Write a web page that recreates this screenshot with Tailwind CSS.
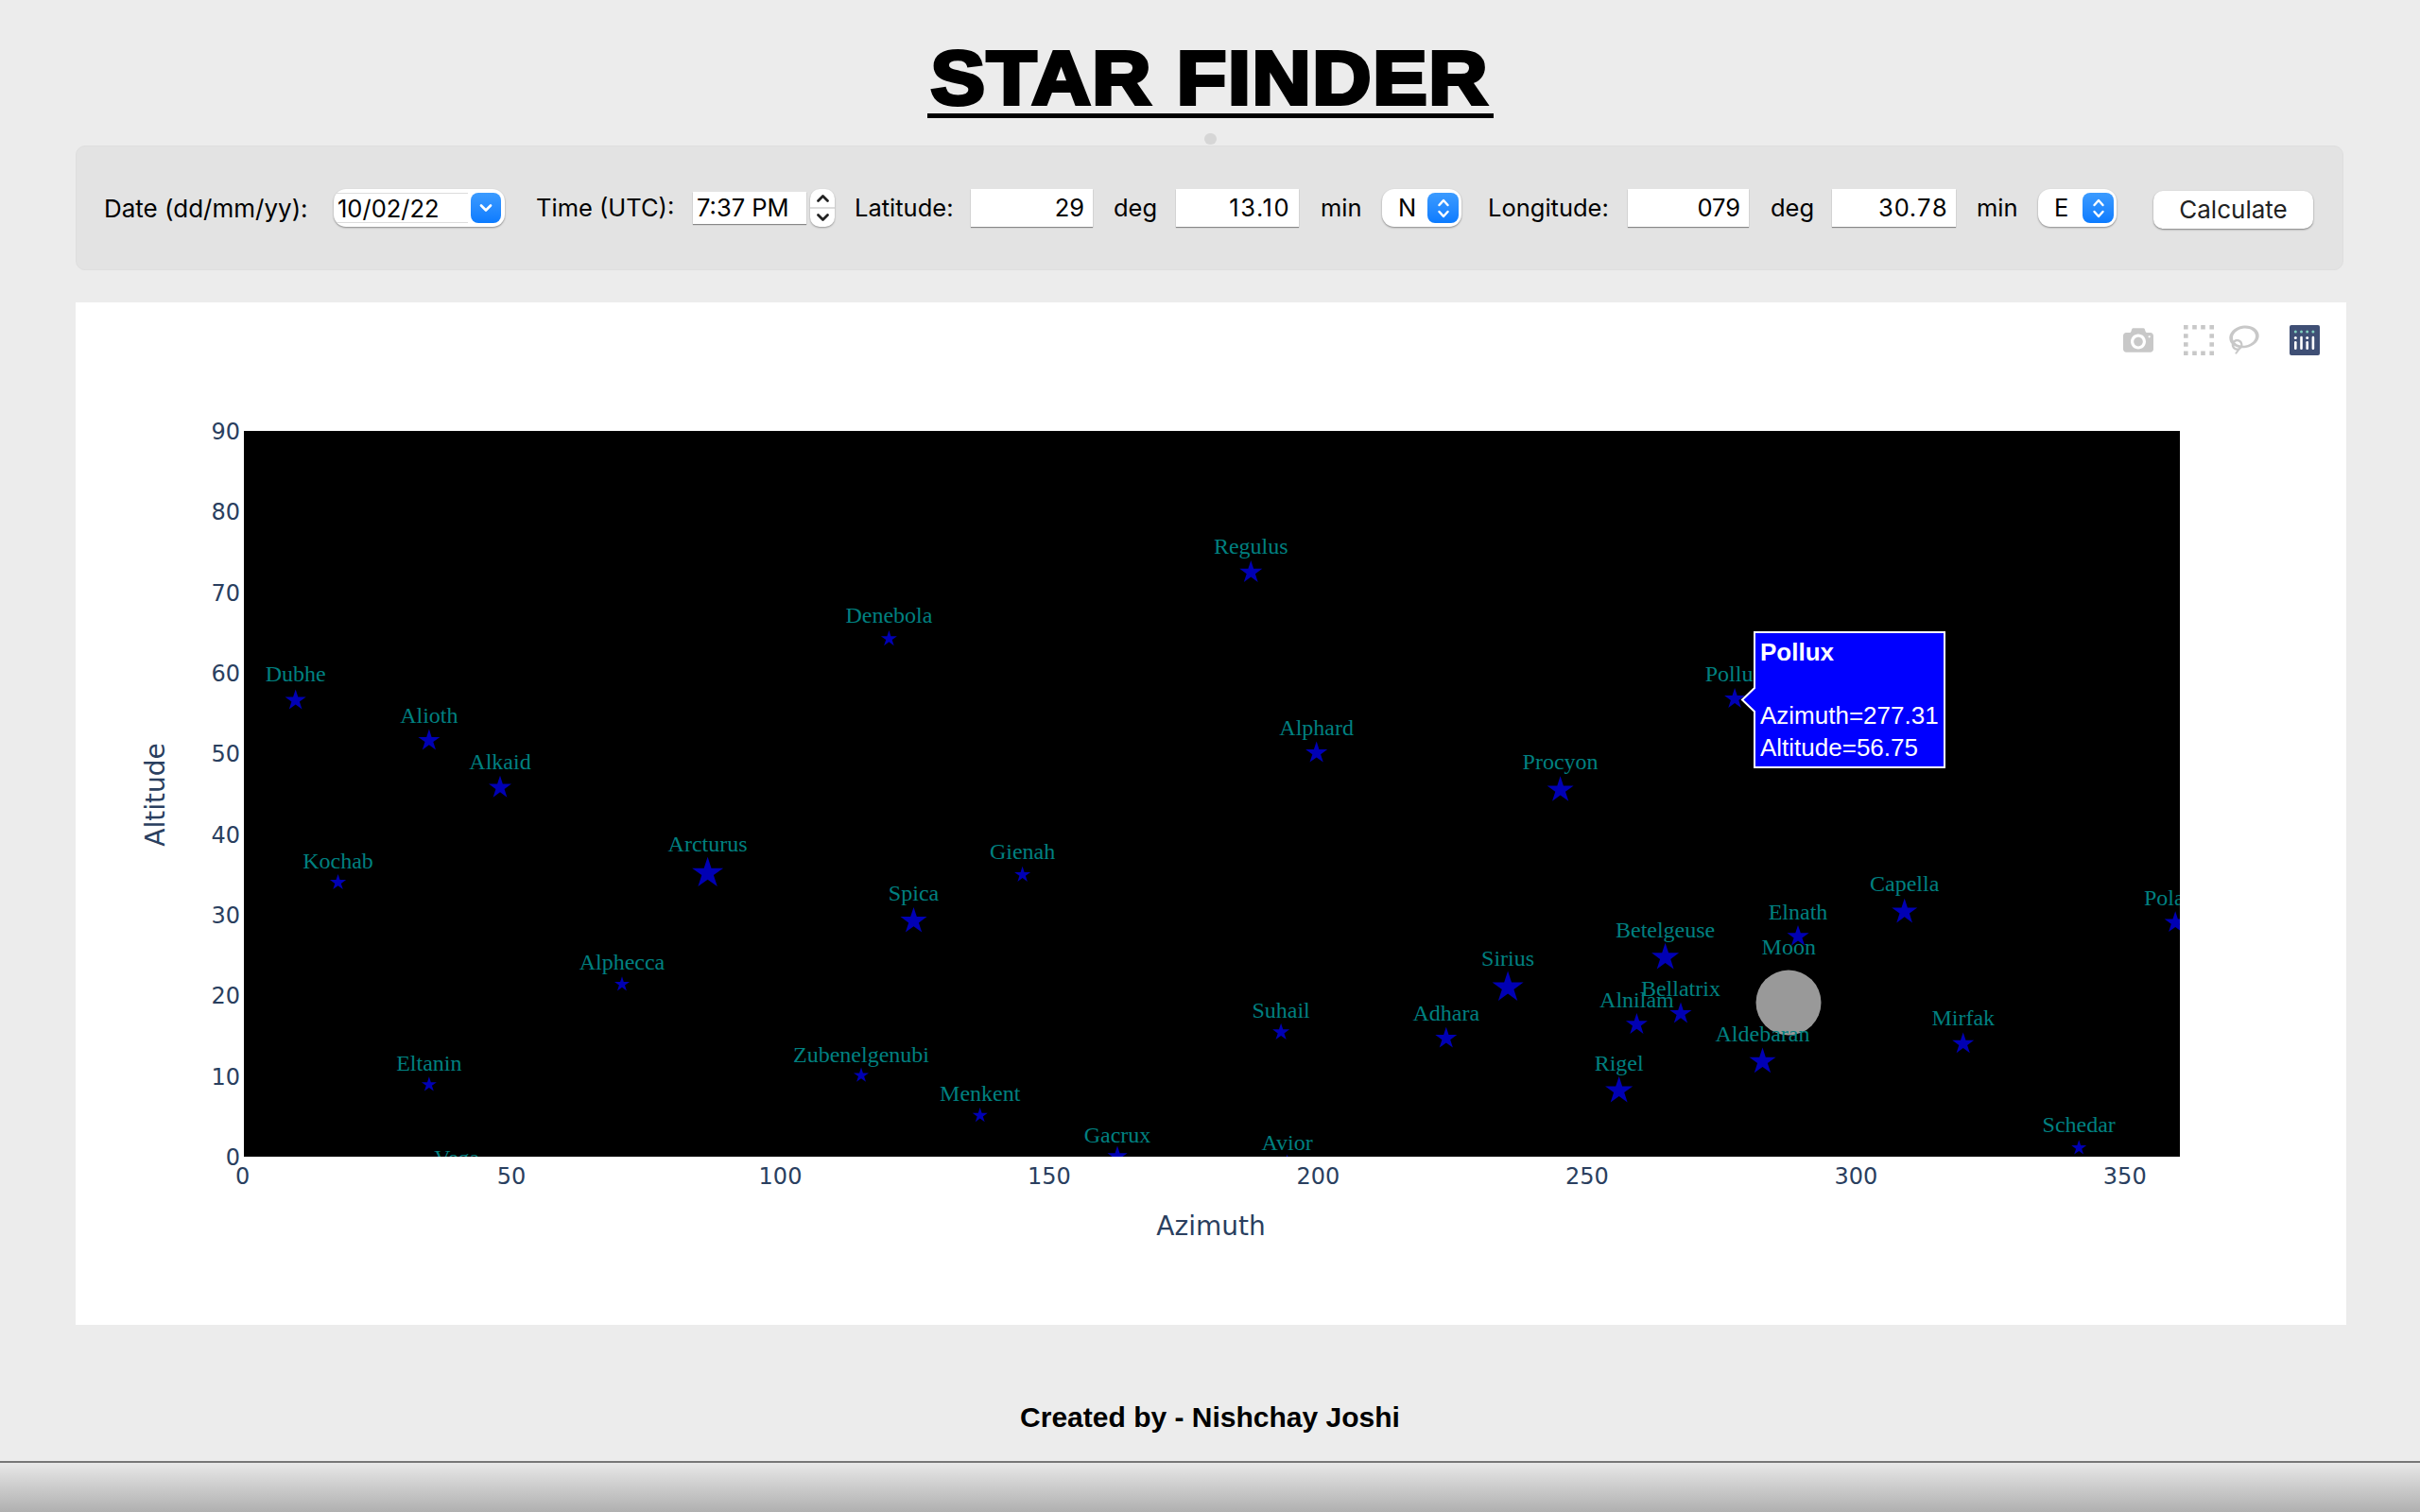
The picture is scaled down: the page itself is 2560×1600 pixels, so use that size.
<!DOCTYPE html>
<html lang="en">
<head>
    <meta charset="UTF-8">
    <title>Star Finder</title>
    <script src="https://cdn.jsdelivr.net/npm/@tailwindcss/browser@4"></script>
</head>
<body class="bg-[#ececec] font-['Inter',sans-serif] text-black">
<div class="w-[2560px] h-[1600px] overflow-hidden flex flex-col">

    <!-- Title -->
    <div class="flex justify-center h-[125px]">
        <h1 class="h-[125px] w-[599px] pt-[43px] flex justify-center border-b-[5px] border-black font-['Liberation_Sans',sans-serif] font-bold text-[79px] leading-[80px] tracking-[1.5px] whitespace-nowrap [-webkit-text-stroke:4px_black]"><span class="inline-block scale-x-[1.09]">STAR FINDER</span></h1>
    </div>
    <div class="mt-[16px] mx-auto w-[13px] h-[12px] rounded-full bg-[#d6d6d6]"></div>

    <!-- Input form -->
    <div class="mt-[1px] ml-[80px] w-[2399px] h-[132px] pl-[29px] flex items-center bg-[#e3e3e3] rounded-[10px] border border-[#dedede] text-[25.500px] whitespace-nowrap">
        <span class="w-[215px] text-[26px]">Date (dd/mm/yy):</span>

        <div class="ml-[28px] w-[181px] h-[40px] flex items-center justify-between pl-[3px] pr-[4px] bg-white rounded-[13px] shadow-[0_1px_2px_rgba(0,0,0,0.4)]">
            <span class="w-[139px] h-[32px] pl-[1px] leading-[32px] border-y border-[#dcdcdc]">10/02/22</span>
            <span class="w-[32px] h-[32px] flex items-center justify-center rounded-[8px] bg-gradient-to-b from-[#3b9bff] to-[#0a7bff]">
                <svg width="14" height="10" viewBox="0 0 14 10" fill="none" stroke="white" stroke-width="2.6" stroke-linecap="round" stroke-linejoin="round"><path d="M2 2.500 7 7.500 12 2.500"/></svg>
            </span>
        </div>

        <span class="ml-[33px] w-[144px]">Time (UTC):</span>
        <span class="ml-[22px] w-[120px] h-[34px] pl-[4px] leading-[34px] bg-white shadow-[0_1px_1px_rgba(0,0,0,0.4)]">7:37 PM</span>
        <div class="ml-[4px] w-[26px] h-[40px] flex flex-col items-center justify-between pt-[5px] pb-[5px] bg-white rounded-[10px] shadow-[0_1px_2px_rgba(0,0,0,0.35)]">
            <svg width="15" height="10" viewBox="0 0 15 10" fill="none" stroke="#222" stroke-width="2.800" stroke-linecap="round" stroke-linejoin="round"><path d="M2.500 7.500 7.500 2.500 12.500 7.500"/></svg>
            <span class="w-full h-[2px] bg-[#dddddd]"></span>
            <svg width="15" height="10" viewBox="0 0 15 10" fill="none" stroke="#222" stroke-width="2.800" stroke-linecap="round" stroke-linejoin="round"><path d="M2.500 2.500 7.500 7.500 12.500 2.500"/></svg>
        </div>

        <span class="ml-[21px] w-[104px]">Latitude:</span>
        <span class="ml-[19px] w-[129px] h-[40px] pr-[9px] leading-[40px] text-right bg-white shadow-[0_1px_1px_rgba(0,0,0,0.4)]">29</span>
        <span class="ml-[22px] w-[45px]">deg</span>
        <span class="ml-[21px] w-[130px] h-[40px] pr-[9px] leading-[40px] text-right tracking-[1.5px] bg-white shadow-[0_1px_1px_rgba(0,0,0,0.4)]">13.10</span>
        <span class="ml-[23px] w-[42px]">min</span>

        <div class="ml-[23px] w-[84px] h-[40px] flex items-center justify-between pl-[17px] pr-[3px] bg-white rounded-[13px] shadow-[0_1px_2px_rgba(0,0,0,0.4)]">
            <span>N</span>
            <span class="w-[33px] h-[32px] flex flex-col items-center justify-center gap-[3px] rounded-[8px] bg-gradient-to-b from-[#3b9bff] to-[#0a7bff]">
                <svg width="14" height="9" viewBox="0 0 14 9" fill="none" stroke="white" stroke-width="2.400" stroke-linecap="round" stroke-linejoin="round"><path d="M2.500 7 7 2 11.500 7"/></svg>
                <svg width="14" height="9" viewBox="0 0 14 9" fill="none" stroke="white" stroke-width="2.400" stroke-linecap="round" stroke-linejoin="round"><path d="M2.500 2 7 7 11.500 2"/></svg>
            </span>
        </div>

        <span class="ml-[28px] w-[129px]">Longitude:</span>
        <span class="ml-[19px] w-[128px] h-[40px] pr-[9px] leading-[40px] text-right bg-white shadow-[0_1px_1px_rgba(0,0,0,0.4)]">079</span>
        <span class="ml-[23px] w-[45px]">deg</span>
        <span class="ml-[20px] w-[131px] h-[40px] pr-[9px] leading-[40px] text-right tabular-nums bg-white shadow-[0_1px_1px_rgba(0,0,0,0.4)]">30.78</span>
        <span class="ml-[22px] w-[42px]">min</span>

        <div class="ml-[23px] w-[83px] h-[40px] flex items-center justify-between pl-[17px] pr-[3px] bg-white rounded-[13px] shadow-[0_1px_2px_rgba(0,0,0,0.4)]">
            <span>E</span>
            <span class="w-[33px] h-[32px] flex flex-col items-center justify-center gap-[3px] rounded-[8px] bg-gradient-to-b from-[#3b9bff] to-[#0a7bff]">
                <svg width="14" height="9" viewBox="0 0 14 9" fill="none" stroke="white" stroke-width="2.400" stroke-linecap="round" stroke-linejoin="round"><path d="M2.500 7 7 2 11.500 7"/></svg>
                <svg width="14" height="9" viewBox="0 0 14 9" fill="none" stroke="white" stroke-width="2.400" stroke-linecap="round" stroke-linejoin="round"><path d="M2.500 2 7 7 11.500 2"/></svg>
            </span>
        </div>

        <button class="ml-[39px] mt-[4px] w-[169px] h-[40px] pb-[3px] bg-white rounded-[10px] text-center text-[#222] text-[26px] shadow-[0_1px_2px_rgba(0,0,0,0.45)]">Calculate</button>
    </div>

    <!-- Chart, viewBox is in page pixels -->
    <div class="mt-[34px] ml-[80px] w-[2402px] h-[1082px] bg-white">
        <svg id="chart" class="block w-[2402px] h-[1082px]" viewBox="80 320 2402 1082">
            <defs>
                <clipPath id="plotClip"><rect x="258" y="456" width="2048" height="768"/></clipPath>
            </defs>
            <rect x="258" y="456" width="2048" height="768" fill="#000"/>
            <g id="ticks" class="font-['DejaVu_Sans',sans-serif] text-[24px] fill-[#2a3f5f]"></g>
            <text x="1281" y="1307" text-anchor="middle" class="font-['DejaVu_Sans',sans-serif] text-[28px] fill-[#2a3f5f]">Azimuth</text>
            <text transform="translate(174 841) rotate(-90)" text-anchor="middle" class="font-['DejaVu_Sans',sans-serif] text-[28px] fill-[#2a3f5f]">Altitude</text>
            <g clip-path="url(#plotClip)">
                <g id="stars" fill="#0000b4"></g>
                <circle cx="1892" cy="1061" r="34.500" fill="#999"/>
                <g id="labels" class="font-['Liberation_Serif',serif] text-[24px] fill-[#008080]"></g>
            </g>

            <!-- Hover tooltip -->
            <path d="M1843 740.500 1856 728V669H2057V812H1856V753Z" fill="#0000ff" stroke="#fff" stroke-width="2"/>
            <g class="font-['Liberation_Sans',sans-serif] text-[26px] fill-white">
                <text x="1862" y="699" class="font-bold">Pollux</text>
                <text x="1862" y="766">Azimuth=277.31</text>
                <text x="1862" y="800">Altitude=56.75</text>
            </g>

            <!-- Modebar -->
            <g fill="#c8c8c8">
                <path transform="translate(2246 344) scale(0.032 -0.032) translate(0 -850)" d="m500 450c-83 0-150-67-150-150 0-83 67-150 150-150 83 0 150 67 150 150 0 83-67 150-150 150z m400 150h-120c-16 0-34 13-39 29l-31 93c-6 15-23 28-40 28h-340c-16 0-34-13-39-28l-31-94c-6-15-23-28-40-28h-120c-55 0-100-45-100-100v-450c0-55 45-100 100-100h800c55 0 100 45 100 100v450c0 55-45 100-100 100z m-400-550c-138 0-250 112-250 250 0 138 112 250 250 250 138 0 250-112 250-250 0-138-112-250-250-250z m365 380c-19 0-35 16-35 35 0 19 16 35 35 35 19 0 35-16 35-35 0-19-16-35-35-35z"/>
                <path d="M2310 344h4.600v4.600h-4.600zM2319.200 344h4.600v4.600h-4.600zM2328.200 344h4.600v4.600h-4.600zM2337.400 344h4.600v4.600h-4.600zM2310 353.200h4.600v4.600h-4.600zM2337.400 353.200h4.600v4.600h-4.600zM2310 362.200h4.600v4.600h-4.600zM2337.400 362.200h4.600v4.600h-4.600zM2310 371.400h4.600v4.600h-4.600zM2319.200 371.400h4.600v4.600h-4.600zM2328.200 371.400h4.600v4.600h-4.600zM2337.400 371.400h4.600v4.600h-4.600z"/>
                <path transform="translate(2358 344) scale(0.031 -0.031) translate(0 -850)" d="M1018 538c-36 207-290 336-568 286-277-48-473-256-436-463 10-57 36-108 76-151-13-66 11-137 68-183 34-28 75-41 114-42l-55-70 0 0c-2-1-3-2-4-3-10-14-8-34 5-45 14-11 34-8 45 4 1 1 2 3 2 5l0 0 113 140c16 11 31 24 45 40 4 3 6 7 8 11 48-3 100 0 151 9 278 48 473 255 436 462z m-624-379c-80 14-149 48-197 96 42 42 109 47 156 9 33-26 47-66 41-105z m-187-74c-19 16-33 37-39 60 50-32 109-55 174-68-42-25-95-24-135 8z m360 75c-34-7-69-9-102-8 8 62-16 128-68 170-73 59-175 54-244-5-9 20-16 40-20 61-28 159 121 317 333 354s407-60 434-217c28-159-121-318-333-355z"/>
            </g>
            <g transform="translate(2422 344)">
                <rect width="32" height="32" rx="2" fill="#3f4f75"/>
                <g fill="#80cfbe">
                    <circle cx="6.300" cy="7" r="1.500"/><circle cx="12.500" cy="7" r="1.500"/><circle cx="18.700" cy="7" r="1.500"/><circle cx="24.900" cy="7" r="1.500"/>
                </g>
                <g fill="#fff">
                    <circle cx="6.300" cy="13.400" r="1.500"/><circle cx="18.700" cy="13.400" r="1.500"/>
                    <rect x="5" y="17" width="2.600" height="9" rx="1.300"/><rect x="11.200" y="11.800" width="2.600" height="14.200" rx="1.300"/>
                    <rect x="17.400" y="17" width="2.600" height="9" rx="1.300"/><rect x="23.600" y="11.800" width="2.600" height="14.200" rx="1.300"/>
                </g>
            </g>
        </svg>
    </div>

    <!-- Footer -->
    <div class="h-[144px] pt-[79px] text-center font-['Liberation_Sans',sans-serif] font-bold text-[30px] leading-[38px]">Created by - Nishchay Joshi</div>
    <div class="h-[54px] border-t-2 border-[#777] bg-gradient-to-b from-[#e8e8e8] to-[#b0b0b0]"></div>
</div>

<script>
    const SVG_NS = "http://www.w3.org/2000/svg";
    const SCALE = 2560 / 1568; // positions below were read off the 1568px wide picture

    // name, star x, star y, label y, star width in real pixels
    const stars = [
        ["Dubhe", 191.5, 454, 437, 22], ["Alioth", 278, 480, 464, 23], ["Alkaid", 324, 510.5, 494, 24],
        ["Kochab", 219, 572, 558, 17], ["Arcturus", 458.5, 566, 547, 33], ["Alphecca", 403, 638, 624, 16],
        ["Eltanin", 278, 703, 689, 16], ["Vega", 296, 768, 750.5, 30], ["Denebola", 576, 414, 399, 17],
        ["Spica", 592, 597, 579, 28], ["Gienah", 662.5, 567, 552, 17], ["Zubenelgenubi", 558, 697, 684, 16],
        ["Menkent", 635, 723, 709, 16], ["Gacrux", 724, 749.5, 736, 21], ["Regulus", 810.5, 371, 354, 24],
        ["Alphard", 853, 488, 472, 23], ["Suhail", 830, 669, 655, 18], ["Avior", 834, 755, 741, 21],
        ["Procyon", 1011, 512, 494, 28], ["Sirius", 977, 640, 621, 33], ["Adhara", 937, 673, 657, 23],
        ["Betelgeuse", 1079, 620.5, 603, 29], ["Alnilam", 1060.5, 664, 648, 23], ["Bellatrix", 1089, 657, 641, 23],
        ["Rigel", 1049, 707, 689, 29], ["Aldebaran", 1142, 688, 670, 28], ["Moon", 1159, 0, 614, 0],
        ["Elnath", 1165, 607, 591, 23], ["Capella", 1234, 591, 573, 27], ["Pollux", 1124, 453, 437, 22],
        ["Mirfak", 1272, 676.5, 660, 23], ["Schedar", 1347, 744, 729, 16], ["Polaris", 1409.5, 598, 582, 23]
    ];

    function starPoints(cx, cy, width) {
        const outer = width / 1.9;
        const inner = outer * 0.382;
        const pts = [];
        for (let i = 0; i < 10; i++) {
            const r = i % 2 ? inner : outer;
            const a = -Math.PI / 2 + i * Math.PI / 5;
            pts.push((cx + r * Math.cos(a)).toFixed(1) + "," + (cy + r * Math.sin(a)).toFixed(1));
        }
        return pts.join(" ");
    }

    function addText(parent, x, y, anchor, str) {
        const t = document.createElementNS(SVG_NS, "text");
        t.setAttribute("x", x);
        t.setAttribute("y", y);
        t.setAttribute("text-anchor", anchor);
        t.textContent = str;
        parent.appendChild(t);
    }

    const starGroup = document.getElementById("stars");
    const labelGroup = document.getElementById("labels");
    stars.forEach(([name, sx, sy, ly, size]) => {
        const x = sx * SCALE;
        if (size) {
            const p = document.createElementNS(SVG_NS, "polygon");
            p.setAttribute("points", starPoints(x, sy * SCALE, size));
            starGroup.appendChild(p);
        }
        addText(labelGroup, x, ly * SCALE + 7.7, "middle", name);
    });

    // Axis ticks
    const ticks = document.getElementById("ticks");
    for (let v = 0; v <= 350; v += 50) addText(ticks, 256.6 + v * 5.689, 1253, "middle", v);
    for (let v = 0; v <= 90; v += 10) addText(ticks, 254, 1224 - v * 8.533 + 9, "end", v);
</script>
</body>
</html>
